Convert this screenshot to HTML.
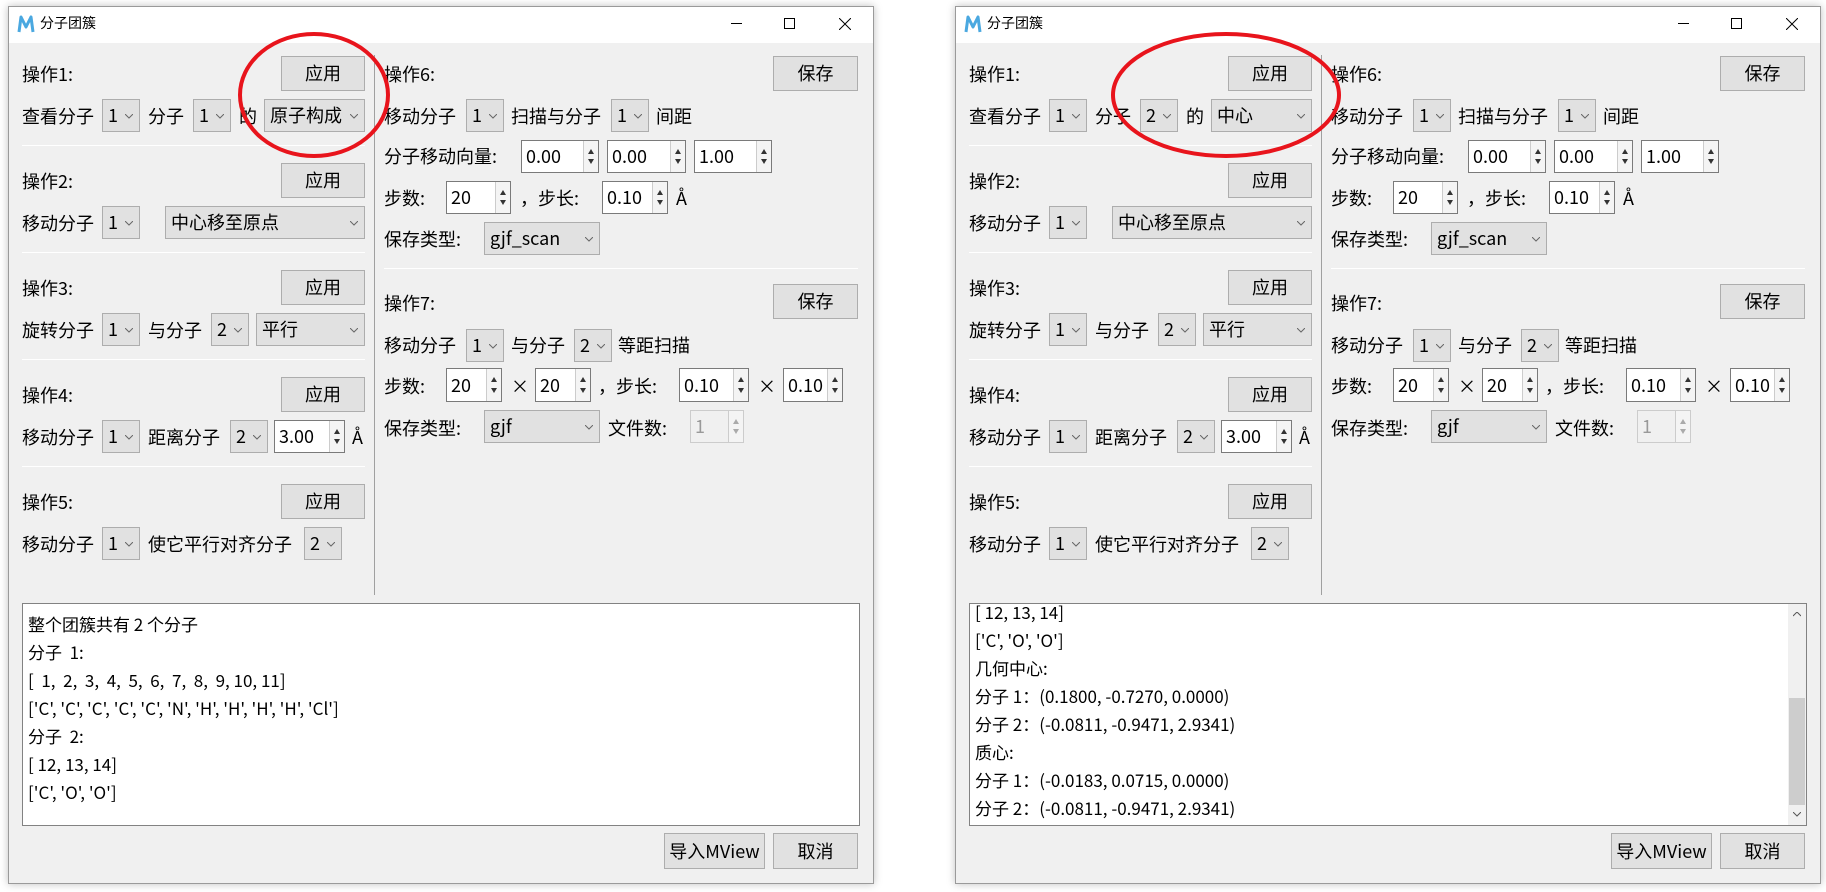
<!DOCTYPE html>
<html><head><meta charset="utf-8">
<style>
*{margin:0;padding:0;box-sizing:border-box}
body{width:1826px;height:892px;background:#fff;position:relative;overflow:hidden;font-family:"Noto Sans CJK SC","Liberation Sans",sans-serif;color:#000}
.win{position:absolute;top:0;left:0;width:1826px;height:892px}
.frame{position:absolute;left:8px;top:6px;width:866px;height:878px;background:#f0f0f0;border:1px solid #9a9a9a;box-shadow:0 0 8px rgba(0,0,0,.25)}
.title{position:absolute;left:9px;top:7px;width:864px;height:36px;background:#fff}
.tt{position:absolute;left:40px;top:13px;font-size:14px;line-height:20px}
.t{position:absolute;font-size:18px;line-height:24px;white-space:nowrap}
.b{position:absolute;background:#e1e1e1;border:1px solid #adadad;font-size:18px;text-align:center}
.c{position:absolute;background:#e1e1e1;border:1px solid #adadad;font-size:18px;padding-left:5px;white-space:nowrap}
.c svg{position:absolute;right:6px;top:50%;margin-top:-2px}
.s{position:absolute;background:#fff;border:1px solid #7a7a7a;font-size:18px;padding-left:4px;white-space:nowrap}
.s .ar{position:absolute;right:0;top:0;bottom:0;width:15px;border-left:1px solid #ccc;background:#f4f4f4}
.s .ar i{position:absolute;left:4px;width:0;height:0;border-left:3px solid transparent;border-right:3px solid transparent}
.s .ar .u{top:8px;border-bottom:5px solid #333}
.s .ar .d{bottom:8px;border-top:5px solid #333}
.s.dis{background:#f0f0f0;border-color:#ccc;color:#999}
.s.dis .ar .u{border-bottom-color:#aaa}.s.dis .ar .d{border-top-color:#aaa}
.hl{position:absolute;height:1px;background:#a0a0a0;border-bottom:1px solid #fff}
.vl{position:absolute;width:1px;background:#a0a0a0}
.ta{position:absolute;left:22px;top:603px;width:838px;height:223px;background:#fff;border:1px solid #828282;overflow:hidden}
.ta div{position:absolute;left:5px;font-size:17px;line-height:28px;white-space:nowrap}
</style></head><body>

<!-- LEFT WINDOW -->
<div class="win" id="w1">
<div class="frame"></div>
<div class="title"></div>
<svg style="position:absolute;left:16px;top:14px" width="20" height="20" viewBox="0 0 20 20"><path d="M3 18 L5 3 L10 13 L15 3 L17 18" fill="none" stroke="#4aa8e0" stroke-width="3" stroke-linejoin="round"/></svg>
<div class="tt">分子团簇</div>
<div style="position:absolute;left:731px;top:23px;width:11px;height:1px;background:#000"></div>
<div style="position:absolute;left:784px;top:18px;width:11px;height:11px;border:1px solid #000"></div>
<svg style="position:absolute;left:839px;top:18px" width="12" height="12"><path d="M0 0L12 12M12 0L0 12" stroke="#000" stroke-width="1"/></svg>

<div class="t" style="left:22px;top:62px">操作1:</div>
<div class="b" style="left:281px;top:56px;width:84px;height:35px;line-height:33px">应用</div>
<div class="t" style="left:22px;top:104px">查看分子</div>
<div class="c" style="left:102px;top:99px;width:38px;height:33px;line-height:31px">1<svg width="8" height="5"><path d="M0 0L4 4L8 0" fill="none" stroke="#666"/></svg></div>
<div class="t" style="left:148px;top:104px">分子</div>
<div class="c" style="left:193px;top:99px;width:38px;height:33px;line-height:31px">1<svg width="8" height="5"><path d="M0 0L4 4L8 0" fill="none" stroke="#666"/></svg></div>
<div class="t" style="left:239px;top:104px">的</div>
<div class="c" style="left:264px;top:99px;width:101px;height:33px;line-height:31px">原子构成<svg width="8" height="5"><path d="M0 0L4 4L8 0" fill="none" stroke="#666"/></svg></div>
<div class="hl" style="left:22px;top:145px;width:343px"></div>

<div class="t" style="left:22px;top:169px">操作2:</div>
<div class="b" style="left:281px;top:163px;width:84px;height:35px;line-height:33px">应用</div>
<div class="t" style="left:22px;top:211px">移动分子</div>
<div class="c" style="left:102px;top:206px;width:38px;height:33px;line-height:31px">1<svg width="8" height="5"><path d="M0 0L4 4L8 0" fill="none" stroke="#666"/></svg></div>
<div class="c" style="left:165px;top:206px;width:200px;height:33px;line-height:31px">中心移至原点<svg width="8" height="5"><path d="M0 0L4 4L8 0" fill="none" stroke="#666"/></svg></div>
<div class="hl" style="left:22px;top:252px;width:343px"></div>

<div class="t" style="left:22px;top:276px">操作3:</div>
<div class="b" style="left:281px;top:270px;width:84px;height:35px;line-height:33px">应用</div>
<div class="t" style="left:22px;top:318px">旋转分子</div>
<div class="c" style="left:102px;top:313px;width:38px;height:33px;line-height:31px">1<svg width="8" height="5"><path d="M0 0L4 4L8 0" fill="none" stroke="#666"/></svg></div>
<div class="t" style="left:148px;top:318px">与分子</div>
<div class="c" style="left:211px;top:313px;width:38px;height:33px;line-height:31px">2<svg width="8" height="5"><path d="M0 0L4 4L8 0" fill="none" stroke="#666"/></svg></div>
<div class="c" style="left:256px;top:313px;width:109px;height:33px;line-height:31px">平行<svg width="8" height="5"><path d="M0 0L4 4L8 0" fill="none" stroke="#666"/></svg></div>
<div class="hl" style="left:22px;top:359px;width:343px"></div>

<div class="t" style="left:22px;top:383px">操作4:</div>
<div class="b" style="left:281px;top:377px;width:84px;height:35px;line-height:33px">应用</div>
<div class="t" style="left:22px;top:425px">移动分子</div>
<div class="c" style="left:102px;top:420px;width:38px;height:33px;line-height:31px">1<svg width="8" height="5"><path d="M0 0L4 4L8 0" fill="none" stroke="#666"/></svg></div>
<div class="t" style="left:148px;top:425px">距离分子</div>
<div class="c" style="left:230px;top:420px;width:38px;height:33px;line-height:31px">2<svg width="8" height="5"><path d="M0 0L4 4L8 0" fill="none" stroke="#666"/></svg></div>
<div class="s" style="left:274px;top:420px;width:71px;height:33px;line-height:31px">3.00<span class="ar"><i class="u"></i><i class="d"></i></span></div>
<div class="t" style="left:352px;top:425px">Å</div>
<div class="hl" style="left:22px;top:466px;width:343px"></div>

<div class="t" style="left:22px;top:490px">操作5:</div>
<div class="b" style="left:281px;top:484px;width:84px;height:35px;line-height:33px">应用</div>
<div class="t" style="left:22px;top:532px">移动分子</div>
<div class="c" style="left:102px;top:527px;width:38px;height:33px;line-height:31px">1<svg width="8" height="5"><path d="M0 0L4 4L8 0" fill="none" stroke="#666"/></svg></div>
<div class="t" style="left:148px;top:532px">使它平行对齐分子</div>
<div class="c" style="left:304px;top:527px;width:38px;height:33px;line-height:31px">2<svg width="8" height="5"><path d="M0 0L4 4L8 0" fill="none" stroke="#666"/></svg></div>

<div class="vl" style="left:374px;top:55px;height:540px"></div>

<div class="t" style="left:384px;top:62px">操作6:</div>
<div class="b" style="left:773px;top:56px;width:85px;height:35px;line-height:33px">保存</div>
<div class="t" style="left:384px;top:104px">移动分子</div>
<div class="c" style="left:466px;top:99px;width:38px;height:33px;line-height:31px">1<svg width="8" height="5"><path d="M0 0L4 4L8 0" fill="none" stroke="#666"/></svg></div>
<div class="t" style="left:511px;top:104px">扫描与分子</div>
<div class="c" style="left:611px;top:99px;width:38px;height:33px;line-height:31px">1<svg width="8" height="5"><path d="M0 0L4 4L8 0" fill="none" stroke="#666"/></svg></div>
<div class="t" style="left:656px;top:104px">间距</div>
<div class="t" style="left:384px;top:144px">分子移动向量:</div>
<div class="s" style="left:521px;top:140px;width:78px;height:33px;line-height:31px">0.00<span class="ar"><i class="u"></i><i class="d"></i></span></div>
<div class="s" style="left:607px;top:140px;width:79px;height:33px;line-height:31px">0.00<span class="ar"><i class="u"></i><i class="d"></i></span></div>
<div class="s" style="left:694px;top:140px;width:78px;height:33px;line-height:31px">1.00<span class="ar"><i class="u"></i><i class="d"></i></span></div>
<div class="t" style="left:384px;top:186px">步数:</div>
<div class="s" style="left:446px;top:181px;width:65px;height:33px;line-height:31px">20<span class="ar"><i class="u"></i><i class="d"></i></span></div>
<div class="t" style="left:520px;top:186px">，步长:</div>
<div class="s" style="left:602px;top:181px;width:66px;height:33px;line-height:31px">0.10<span class="ar"><i class="u"></i><i class="d"></i></span></div>
<div class="t" style="left:676px;top:186px">Å</div>
<div class="t" style="left:384px;top:227px">保存类型:</div>
<div class="c" style="left:484px;top:222px;width:116px;height:33px;line-height:31px">gjf_scan<svg width="8" height="5"><path d="M0 0L4 4L8 0" fill="none" stroke="#666"/></svg></div>
<div class="hl" style="left:384px;top:268px;width:474px"></div>

<div class="t" style="left:384px;top:291px">操作7:</div>
<div class="b" style="left:773px;top:284px;width:85px;height:35px;line-height:33px">保存</div>
<div class="t" style="left:384px;top:333px">移动分子</div>
<div class="c" style="left:466px;top:329px;width:38px;height:33px;line-height:31px">1<svg width="8" height="5"><path d="M0 0L4 4L8 0" fill="none" stroke="#666"/></svg></div>
<div class="t" style="left:511px;top:333px">与分子</div>
<div class="c" style="left:574px;top:329px;width:38px;height:33px;line-height:31px">2<svg width="8" height="5"><path d="M0 0L4 4L8 0" fill="none" stroke="#666"/></svg></div>
<div class="t" style="left:618px;top:333px">等距扫描</div>
<div class="t" style="left:384px;top:374px">步数:</div>
<div class="s" style="left:446px;top:368px;width:56px;height:34px;line-height:32px">20<span class="ar"><i class="u"></i><i class="d"></i></span></div>
<div class="t" style="left:511px;top:374px">×</div>
<div class="s" style="left:535px;top:368px;width:56px;height:34px;line-height:32px">20<span class="ar"><i class="u"></i><i class="d"></i></span></div>
<div class="t" style="left:598px;top:374px">，步长:</div>
<div class="s" style="left:679px;top:368px;width:70px;height:34px;line-height:32px">0.10<span class="ar"><i class="u"></i><i class="d"></i></span></div>
<div class="t" style="left:758px;top:374px">×</div>
<div class="s" style="left:783px;top:368px;width:60px;height:34px;line-height:32px">0.10<span class="ar"><i class="u"></i><i class="d"></i></span></div>
<div class="t" style="left:384px;top:416px">保存类型:</div>
<div class="c" style="left:484px;top:410px;width:116px;height:33px;line-height:31px">gjf<svg width="8" height="5"><path d="M0 0L4 4L8 0" fill="none" stroke="#666"/></svg></div>
<div class="t" style="left:608px;top:416px">文件数:</div>
<div class="s dis" style="left:690px;top:410px;width:54px;height:33px;line-height:31px">1<span class="ar"><i class="u"></i><i class="d"></i></span></div>

<div class="ta">
<div style="top:6px">整个团簇共有 2 个分子</div>
<div style="top:34px">分子 &nbsp;1:</div>
<div style="top:62px">[ &nbsp;1, &nbsp;2, &nbsp;3, &nbsp;4, &nbsp;5, &nbsp;6, &nbsp;7, &nbsp;8, &nbsp;9, 10, 11]</div>
<div style="top:90px">['C', 'C', 'C', 'C', 'C', 'N', 'H', 'H', 'H', 'H', 'Cl']</div>
<div style="top:118px">分子 &nbsp;2:</div>
<div style="top:146px">[ 12, 13, 14]</div>
<div style="top:174px">['C', 'O', 'O']</div>
</div>
<div class="b" style="left:664px;top:833px;width:101px;height:36px;line-height:34px">导入MView</div>
<div class="b" style="left:773px;top:833px;width:85px;height:36px;line-height:34px">取消</div>
<svg style="position:absolute;left:0;top:0" width="900" height="200"><ellipse cx="314" cy="95" rx="74" ry="61" fill="none" stroke="#e8141c" stroke-width="4"/></svg>
</div>

<!-- RIGHT WINDOW -->
<div class="win" style="left:947px">
<div class="frame"></div>
<div class="title"></div>
<svg style="position:absolute;left:16px;top:14px" width="20" height="20" viewBox="0 0 20 20"><path d="M3 18 L5 3 L10 13 L15 3 L17 18" fill="none" stroke="#4aa8e0" stroke-width="3" stroke-linejoin="round"/></svg>
<div class="tt">分子团簇</div>
<div style="position:absolute;left:731px;top:23px;width:11px;height:1px;background:#000"></div>
<div style="position:absolute;left:784px;top:18px;width:11px;height:11px;border:1px solid #000"></div>
<svg style="position:absolute;left:839px;top:18px" width="12" height="12"><path d="M0 0L12 12M12 0L0 12" stroke="#000" stroke-width="1"/></svg>

<div class="t" style="left:22px;top:62px">操作1:</div>
<div class="b" style="left:281px;top:56px;width:84px;height:35px;line-height:33px">应用</div>
<div class="t" style="left:22px;top:104px">查看分子</div>
<div class="c" style="left:102px;top:99px;width:38px;height:33px;line-height:31px">1<svg width="8" height="5"><path d="M0 0L4 4L8 0" fill="none" stroke="#666"/></svg></div>
<div class="t" style="left:148px;top:104px">分子</div>
<div class="c" style="left:193px;top:99px;width:38px;height:33px;line-height:31px">2<svg width="8" height="5"><path d="M0 0L4 4L8 0" fill="none" stroke="#666"/></svg></div>
<div class="t" style="left:239px;top:104px">的</div>
<div class="c" style="left:264px;top:99px;width:101px;height:33px;line-height:31px">中心<svg width="8" height="5"><path d="M0 0L4 4L8 0" fill="none" stroke="#666"/></svg></div>
<div class="hl" style="left:22px;top:145px;width:343px"></div>

<div class="t" style="left:22px;top:169px">操作2:</div>
<div class="b" style="left:281px;top:163px;width:84px;height:35px;line-height:33px">应用</div>
<div class="t" style="left:22px;top:211px">移动分子</div>
<div class="c" style="left:102px;top:206px;width:38px;height:33px;line-height:31px">1<svg width="8" height="5"><path d="M0 0L4 4L8 0" fill="none" stroke="#666"/></svg></div>
<div class="c" style="left:165px;top:206px;width:200px;height:33px;line-height:31px">中心移至原点<svg width="8" height="5"><path d="M0 0L4 4L8 0" fill="none" stroke="#666"/></svg></div>
<div class="hl" style="left:22px;top:252px;width:343px"></div>

<div class="t" style="left:22px;top:276px">操作3:</div>
<div class="b" style="left:281px;top:270px;width:84px;height:35px;line-height:33px">应用</div>
<div class="t" style="left:22px;top:318px">旋转分子</div>
<div class="c" style="left:102px;top:313px;width:38px;height:33px;line-height:31px">1<svg width="8" height="5"><path d="M0 0L4 4L8 0" fill="none" stroke="#666"/></svg></div>
<div class="t" style="left:148px;top:318px">与分子</div>
<div class="c" style="left:211px;top:313px;width:38px;height:33px;line-height:31px">2<svg width="8" height="5"><path d="M0 0L4 4L8 0" fill="none" stroke="#666"/></svg></div>
<div class="c" style="left:256px;top:313px;width:109px;height:33px;line-height:31px">平行<svg width="8" height="5"><path d="M0 0L4 4L8 0" fill="none" stroke="#666"/></svg></div>
<div class="hl" style="left:22px;top:359px;width:343px"></div>

<div class="t" style="left:22px;top:383px">操作4:</div>
<div class="b" style="left:281px;top:377px;width:84px;height:35px;line-height:33px">应用</div>
<div class="t" style="left:22px;top:425px">移动分子</div>
<div class="c" style="left:102px;top:420px;width:38px;height:33px;line-height:31px">1<svg width="8" height="5"><path d="M0 0L4 4L8 0" fill="none" stroke="#666"/></svg></div>
<div class="t" style="left:148px;top:425px">距离分子</div>
<div class="c" style="left:230px;top:420px;width:38px;height:33px;line-height:31px">2<svg width="8" height="5"><path d="M0 0L4 4L8 0" fill="none" stroke="#666"/></svg></div>
<div class="s" style="left:274px;top:420px;width:71px;height:33px;line-height:31px">3.00<span class="ar"><i class="u"></i><i class="d"></i></span></div>
<div class="t" style="left:352px;top:425px">Å</div>
<div class="hl" style="left:22px;top:466px;width:343px"></div>

<div class="t" style="left:22px;top:490px">操作5:</div>
<div class="b" style="left:281px;top:484px;width:84px;height:35px;line-height:33px">应用</div>
<div class="t" style="left:22px;top:532px">移动分子</div>
<div class="c" style="left:102px;top:527px;width:38px;height:33px;line-height:31px">1<svg width="8" height="5"><path d="M0 0L4 4L8 0" fill="none" stroke="#666"/></svg></div>
<div class="t" style="left:148px;top:532px">使它平行对齐分子</div>
<div class="c" style="left:304px;top:527px;width:38px;height:33px;line-height:31px">2<svg width="8" height="5"><path d="M0 0L4 4L8 0" fill="none" stroke="#666"/></svg></div>

<div class="vl" style="left:374px;top:55px;height:540px"></div>

<div class="t" style="left:384px;top:62px">操作6:</div>
<div class="b" style="left:773px;top:56px;width:85px;height:35px;line-height:33px">保存</div>
<div class="t" style="left:384px;top:104px">移动分子</div>
<div class="c" style="left:466px;top:99px;width:38px;height:33px;line-height:31px">1<svg width="8" height="5"><path d="M0 0L4 4L8 0" fill="none" stroke="#666"/></svg></div>
<div class="t" style="left:511px;top:104px">扫描与分子</div>
<div class="c" style="left:611px;top:99px;width:38px;height:33px;line-height:31px">1<svg width="8" height="5"><path d="M0 0L4 4L8 0" fill="none" stroke="#666"/></svg></div>
<div class="t" style="left:656px;top:104px">间距</div>
<div class="t" style="left:384px;top:144px">分子移动向量:</div>
<div class="s" style="left:521px;top:140px;width:78px;height:33px;line-height:31px">0.00<span class="ar"><i class="u"></i><i class="d"></i></span></div>
<div class="s" style="left:607px;top:140px;width:79px;height:33px;line-height:31px">0.00<span class="ar"><i class="u"></i><i class="d"></i></span></div>
<div class="s" style="left:694px;top:140px;width:78px;height:33px;line-height:31px">1.00<span class="ar"><i class="u"></i><i class="d"></i></span></div>
<div class="t" style="left:384px;top:186px">步数:</div>
<div class="s" style="left:446px;top:181px;width:65px;height:33px;line-height:31px">20<span class="ar"><i class="u"></i><i class="d"></i></span></div>
<div class="t" style="left:520px;top:186px">，步长:</div>
<div class="s" style="left:602px;top:181px;width:66px;height:33px;line-height:31px">0.10<span class="ar"><i class="u"></i><i class="d"></i></span></div>
<div class="t" style="left:676px;top:186px">Å</div>
<div class="t" style="left:384px;top:227px">保存类型:</div>
<div class="c" style="left:484px;top:222px;width:116px;height:33px;line-height:31px">gjf_scan<svg width="8" height="5"><path d="M0 0L4 4L8 0" fill="none" stroke="#666"/></svg></div>
<div class="hl" style="left:384px;top:268px;width:474px"></div>

<div class="t" style="left:384px;top:291px">操作7:</div>
<div class="b" style="left:773px;top:284px;width:85px;height:35px;line-height:33px">保存</div>
<div class="t" style="left:384px;top:333px">移动分子</div>
<div class="c" style="left:466px;top:329px;width:38px;height:33px;line-height:31px">1<svg width="8" height="5"><path d="M0 0L4 4L8 0" fill="none" stroke="#666"/></svg></div>
<div class="t" style="left:511px;top:333px">与分子</div>
<div class="c" style="left:574px;top:329px;width:38px;height:33px;line-height:31px">2<svg width="8" height="5"><path d="M0 0L4 4L8 0" fill="none" stroke="#666"/></svg></div>
<div class="t" style="left:618px;top:333px">等距扫描</div>
<div class="t" style="left:384px;top:374px">步数:</div>
<div class="s" style="left:446px;top:368px;width:56px;height:34px;line-height:32px">20<span class="ar"><i class="u"></i><i class="d"></i></span></div>
<div class="t" style="left:511px;top:374px">×</div>
<div class="s" style="left:535px;top:368px;width:56px;height:34px;line-height:32px">20<span class="ar"><i class="u"></i><i class="d"></i></span></div>
<div class="t" style="left:598px;top:374px">，步长:</div>
<div class="s" style="left:679px;top:368px;width:70px;height:34px;line-height:32px">0.10<span class="ar"><i class="u"></i><i class="d"></i></span></div>
<div class="t" style="left:758px;top:374px">×</div>
<div class="s" style="left:783px;top:368px;width:60px;height:34px;line-height:32px">0.10<span class="ar"><i class="u"></i><i class="d"></i></span></div>
<div class="t" style="left:384px;top:416px">保存类型:</div>
<div class="c" style="left:484px;top:410px;width:116px;height:33px;line-height:31px">gjf<svg width="8" height="5"><path d="M0 0L4 4L8 0" fill="none" stroke="#666"/></svg></div>
<div class="t" style="left:608px;top:416px">文件数:</div>
<div class="s dis" style="left:690px;top:410px;width:54px;height:33px;line-height:31px">1<span class="ar"><i class="u"></i><i class="d"></i></span></div>

<div class="ta">
<div style="top:-6px">[ 12, 13, 14]</div>
<div style="top:22px">['C', 'O', 'O']</div>
<div style="top:50px">几何中心:</div>
<div style="top:78px">分子 1：(0.1800, -0.7270, 0.0000)</div>
<div style="top:106px">分子 2：(-0.0811, -0.9471, 2.9341)</div>
<div style="top:134px">质心:</div>
<div style="top:162px">分子 1：(-0.0183, 0.0715, 0.0000)</div>
<div style="top:190px">分子 2：(-0.0811, -0.9471, 2.9341)</div>
<span style="position:absolute;right:0;top:0;width:18px;height:221px;background:#f0f0f0"></span>
<span style="position:absolute;right:1px;top:94px;width:16px;height:107px;background:#cdcdcd"></span>
<svg style="position:absolute;right:5px;top:8px" width="8" height="5"><path d="M0 4L4 0L8 4" fill="none" stroke="#555"/></svg>
<svg style="position:absolute;right:5px;top:208px" width="8" height="5"><path d="M0 0L4 4L8 0" fill="none" stroke="#555"/></svg>
</div>
<div class="b" style="left:664px;top:833px;width:101px;height:36px;line-height:34px">导入MView</div>
<div class="b" style="left:773px;top:833px;width:85px;height:36px;line-height:34px">取消</div>
<svg style="position:absolute;left:0;top:0" width="900" height="200"><ellipse cx="279" cy="95" rx="113" ry="61" fill="none" stroke="#e8141c" stroke-width="4"/></svg>
</div>
</body></html>
